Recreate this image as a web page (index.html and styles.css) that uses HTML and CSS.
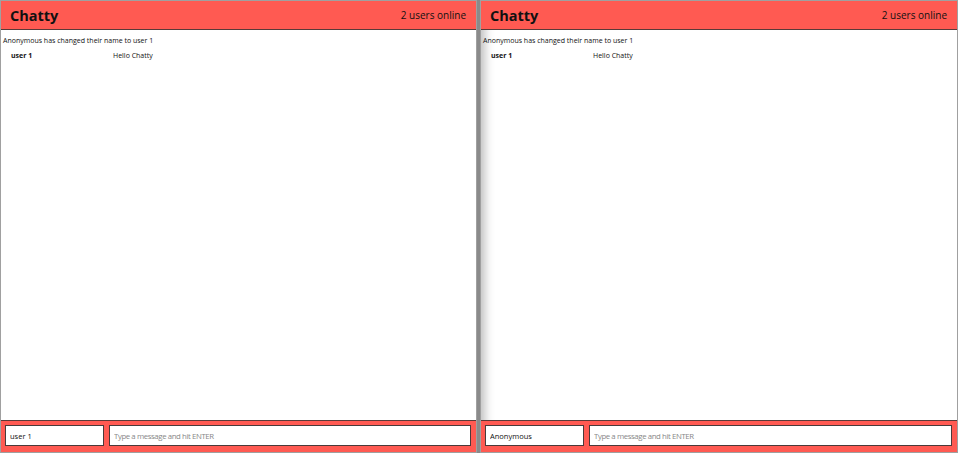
FILE: index.html
```html
<!DOCTYPE html>
<html>
<head>
<meta charset="utf-8">
<link rel="stylesheet" href="styles.css">
</head>
<body>
<div class="screens">
  <section class="chat chat-left">
    <header class="bar">
      <span class="brand">Chatty</span>
      <span class="count">2 users online</span>
    </header>
    <main class="messages">
      <div class="notice">Anonymous has changed their name to user 1</div>
      <div class="message">
        <span class="user">user 1</span>
        <span class="content">Hello Chatty</span>
      </div>
    </main>
    <footer class="composer">
      <input class="name" value="user 1">
      <input class="text" placeholder="Type a message and hit ENTER">
    </footer>
  </section>
  <div class="divider"></div>
  <section class="chat chat-right">
    <header class="bar">
      <span class="brand">Chatty</span>
      <span class="count">2 users online</span>
    </header>
    <main class="messages">
      <div class="notice">Anonymous has changed their name to user 1</div>
      <div class="message">
        <span class="user">user 1</span>
        <span class="content">Hello Chatty</span>
      </div>
    </main>
    <footer class="composer">
      <input class="name" value="Anonymous">
      <input class="text" placeholder="Type a message and hit ENTER">
    </footer>
  </section>
</div>
</body>
</html>
```
FILE: styles.css
```css
* { box-sizing: border-box; }
html, body { margin: 0; padding: 0; }
body {
  width: 958px;
  height: 453px;
  font-family: "Open Sans", "DejaVu Sans", sans-serif;
  background: #ffffff;
  overflow: hidden;
}
.screens {
  display: flex;
  height: 453px;
}
.chat {
  display: flex;
  flex-direction: column;
  height: 453px;
  border: 1px solid #a0a0a0;
  background: #fff;
}
.chat-left { width: 477px; }
.chat-right {
  flex: 1;
  box-shadow: inset 10px 0 10px -6px rgba(0,0,0,0.25);
}
.divider {
  width: 3px;
  background: #8a8a8a;
}
.bar {
  height: 29px;
  flex: none;
  background: #ff5a52;
  border-bottom: 1px solid #5a3a38;
  display: flex;
  align-items: center;
  justify-content: space-between;
  padding: 0 10px 0 9px;
  color: #111;
}
.brand {
  font-weight: 700;
  font-size: 14.5px;
}
.count {
  font-size: 10px;
}
.messages {
  flex: 1;
  padding: 5px 2px;
  font-size: 7px;
  color: #111;
}
.notice {
  line-height: 11px;
  margin-bottom: 4px;
}
.message {
  display: flex;
  line-height: 11px;
}
.user {
  font-weight: 700;
  width: 110px;
  padding-left: 8px;
  flex: none;
}
.composer {
  flex: none;
  height: 32px;
  background: #ff5a52;
  border-top: 1px solid #5a3a38;
  display: flex;
  align-items: flex-start;
  gap: 5px;
  padding: 4px 5px 0 4px;
}
.composer input {
  height: 21px;
  border: 1px solid #4a3a3a;
  background: #fff;
  font-family: "Open Sans", "DejaVu Sans", sans-serif;
  font-size: 7.5px;
  padding: 0 4px;
  color: #111;
  outline: none;
}
.composer input::placeholder { color: #888; font-size: 7.8px; letter-spacing: -0.4px; }
.composer .name { width: 99px; flex: none; }
.composer .text { flex: 1; min-width: 0; }
```
